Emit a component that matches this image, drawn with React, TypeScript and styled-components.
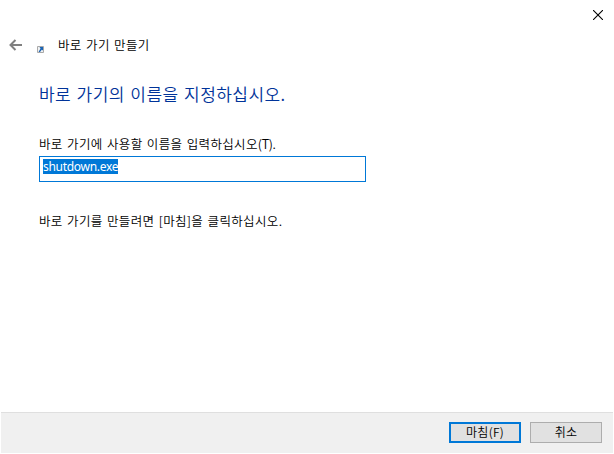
import React, { FunctionComponent } from 'react';
import styled, { createGlobalStyle } from 'styled-components';

const GlobalStyle = createGlobalStyle`
	* {
		box-sizing: border-box;
	}

	body {
		margin: 0;
		background: #fff;
	}
`;

const Wizard = styled.main`
	display: flex;
	flex-direction: column;
	width: 614px;
	height: 454px;
	padding: 0 1px 1px;
	overflow: hidden;
	background: #fff;
	color: #000;
	font-family: 'Noto Sans CJK KR', sans-serif;
	font-size: 12.5px;
	font-weight: 350;
	line-height: 16px;
	letter-spacing: 0.35px;
	word-spacing: 1.2px;
	white-space: nowrap;
`;

const TitleBar = styled.div`
	display: flex;
	justify-content: flex-end;
	height: 30px;
	padding: 10px 10px 0 0;
`;

const IconButton = styled.button`
	display: flex;
	align-self: flex-start;
	padding: 0;
	border: 0;
	background: none;
`;

const BackButton = styled(IconButton)`
	align-self: center;
`;

const Header = styled.header`
	display: flex;
	align-items: center;
	height: 30px;
	padding-left: 8px;
`;

const ShortcutIcon = styled.svg`
	margin: 8px 14px 0 15px;
`;

const Content = styled.section`
	flex: 1;
	padding: 22px 38px 0;
`;

const Heading = styled.h1`
	margin: 0;
	color: #003399;
	font-size: 17px;
	font-weight: 350;
	line-height: 24px;
	letter-spacing: 0.45px;
`;

const Label = styled.label`
	display: block;
	margin-top: 30px;
`;

const AccessKey = styled.span`
	letter-spacing: -0.3px;
`;

const NameField = styled.div`
	display: flex;
	align-items: flex-start;
	width: 327px;
	height: 26px;
	margin-top: 4px;
	padding: 2px 3px;
	border: 1px solid #0078d7;
`;

const Selection = styled.span`
	width: 75px;
	height: 15px;
	background: #0078d7;
	color: #fff;
	font-family: 'Noto Sans', sans-serif;
	font-size: 12px;
	font-weight: 400;
	line-height: 15px;
	letter-spacing: -0.3px;
`;

const Hint = styled.p`
	margin: 31px 0 0;
`;

const Footer = styled.footer`
	display: flex;
	justify-content: flex-end;
	gap: 9px;
	height: 41px;
	padding: 9px 11px 0 0;
	border-top: 1px solid #dfdfdf;
	background: #f0f0f0;
`;

const Button = styled.button<{ $primary?: boolean }>`
	width: 72px;
	height: 21px;
	padding: 0 0 2px;
	border: ${(props) => (props.$primary ? '2px solid #0078d7' : '1px solid #adadad')};
	background: #e1e1e1;
	color: #000;
	font: inherit;
	font-size: 12px;
	line-height: 15px;
	letter-spacing: 0.3px;
`;

const App: FunctionComponent = () => (
	<Wizard>
		<GlobalStyle />
		<TitleBar>
			<IconButton aria-label="닫기">
				<svg width="10" height="10" viewBox="0 0 10 10">
					<path d="M0 0l10 10M10 0L0 10" stroke="#000" strokeWidth="1.1" />
				</svg>
			</IconButton>
		</TitleBar>

		<Header>
			<BackButton aria-label="뒤로">
				<svg width="13" height="12" viewBox="0 0 13 12">
					<path d="M13 6H2M6.5 1l-5 5 5 5" fill="none" stroke="#808080" strokeWidth="2" />
				</svg>
			</BackButton>
			<ShortcutIcon width="7" height="7" viewBox="0 0 7 7">
				<path d="M.5.5h6v6h-6z" fill="#f2f2f2" stroke="#a9a9a9" />
				<path d="M2.5 1H6v3.5L4.8 3.7 3 6H1.5l2-3.5z" fill="#1c65b5" />
			</ShortcutIcon>
			<span>바로 가기 만들기</span>
		</Header>

		<Content>
			<Heading>바로 가기의 이름을 지정하십시오.</Heading>
			<Label>
				바로 가기에 사용할 이름을 입력하십시오<AccessKey>(T).</AccessKey>
			</Label>
			<NameField role="textbox">
				<Selection>shutdown.exe</Selection>
			</NameField>
			<Hint>바로 가기를 만들려면 [마침]을 클릭하십시오.</Hint>
		</Content>

		<Footer>
			<Button $primary>마침(F)</Button>
			<Button>취소</Button>
		</Footer>
	</Wizard>
);

export default App;
